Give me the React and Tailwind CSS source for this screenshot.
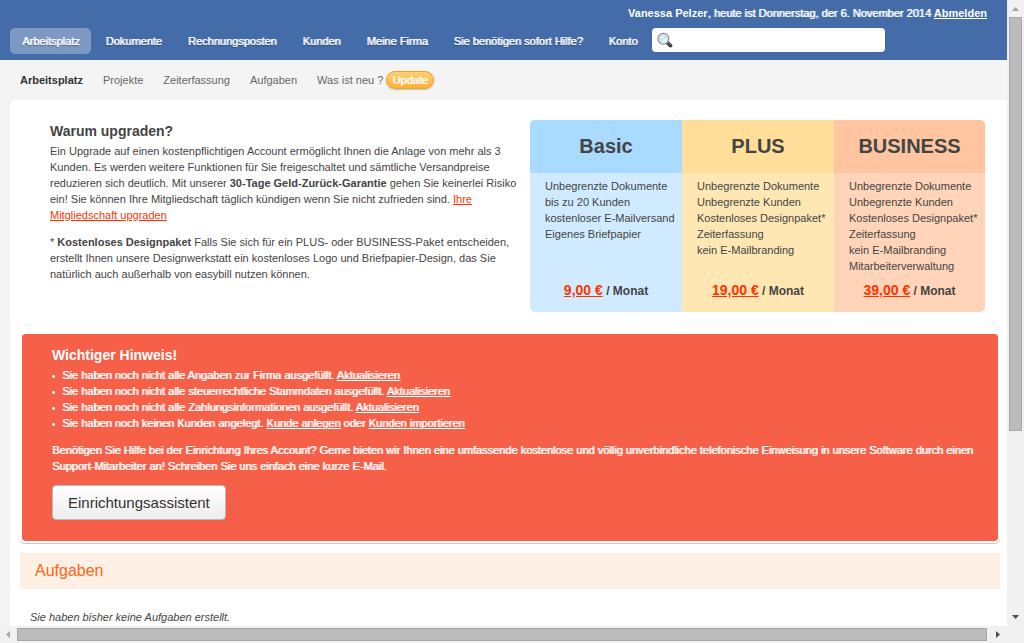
import React from "react";

const navItems = [
  "Dokumente",
  "Rechnungsposten",
  "Kunden",
  "Meine Firma",
  "Sie benötigen sofort Hilfe?",
  "Konto",
];

const plans = [
  {
    name: "Basic",
    price: "9,00 €",
    head: "bg-[#a8dbff]",
    body: "bg-[#d0ebff]",
    features: [
      "Unbegrenzte Dokumente",
      "bis zu 20 Kunden",
      "kostenloser E-Mailversand",
      "Eigenes Briefpapier",
    ],
  },
  {
    name: "PLUS",
    price: "19,00 €",
    head: "bg-[#ffde99]",
    body: "bg-[#ffe7b3]",
    features: [
      "Unbegrenzte Dokumente",
      "Unbegrenzte Kunden",
      "Kostenloses Designpaket*",
      "Zeiterfassung",
      "kein E-Mailbranding",
    ],
  },
  {
    name: "BUSINESS",
    price: "39,00 €",
    head: "bg-[#ffc5a1]",
    body: "bg-[#ffd4b9]",
    features: [
      "Unbegrenzte Dokumente",
      "Unbegrenzte Kunden",
      "Kostenloses Designpaket*",
      "Zeiterfassung",
      "kein E-Mailbranding",
      "Mitarbeiterverwaltung",
    ],
  },
];

const notices = [
  { text: "Sie haben noch nicht alle Angaben zur Firma ausgefüllt.", links: ["Aktualisieren"] },
  { text: "Sie haben noch nicht alle steuerrechtliche Stammdaten ausgefüllt.", links: ["Aktualisieren"] },
  { text: "Sie haben noch nicht alle Zahlungsinformationen ausgefüllt.", links: ["Aktualisieren"] },
  { text: "Sie haben noch keinen Kunden angelegt.", links: ["Kunde anlegen", "Kunden importieren"] },
];

function SearchIcon() {
  return (
    <svg className="size-4 shrink-0" viewBox="0 0 16 16" aria-hidden="true">
      <defs>
        <radialGradient id="lens" cx="0.6" cy="0.65" r="0.6">
          <stop offset="0" stopColor="#f2fbff" />
          <stop offset="1" stopColor="#9fd0ec" />
        </radialGradient>
      </defs>
      <path d="M10.4 10.6 L13.6 13.6" stroke="#3c3c3c" strokeWidth="3.6" strokeLinecap="round" />
      <path d="M10.8 10 L13.8 12.8" stroke="#8b8b8b" strokeWidth="1" strokeLinecap="round" />
      <circle cx="6.4" cy="6.8" r="5.4" fill="url(#lens)" stroke="#858585" strokeWidth="1.2" />
      <circle cx="6.4" cy="6.8" r="4.3" fill="none" stroke="#e3e3e3" strokeWidth="1.1" />
      <path d="M4 6.2 A2.8 2.8 0 0 1 6.6 4" stroke="#fff" strokeWidth="1.2" fill="none" />
    </svg>
  );
}

function Header() {
  return (
    <header className="flex h-[60px] flex-col bg-[#446ca9] text-white">
      <p className="pt-[5px] pr-5 text-right leading-4 [text-shadow:1px_0_0_rgb(255_255_255/0.8)]">
        <b className="[text-shadow:none]">Vanessa Pelzer</b>, heute ist Donnerstag, der 6. November 2014{" "}
        <a href="#abmelden" className="font-bold underline [text-shadow:none]">Abmelden</a>
      </p>
      <div className="flex items-start pt-[7px] pl-2.5">
        <nav className="flex gap-[2px] leading-[26px] whitespace-nowrap [text-shadow:1px_0_0_rgb(255_255_255/0.8),0_1px_1px_rgb(0_0_0/0.4)]">
          <a href="#arbeitsplatz" className="rounded-[5px] bg-[#7c98c3] px-3">Arbeitsplatz</a>
          {navItems.map((item) => (
            <a key={item} href="#nav" className="px-3">{item}</a>
          ))}
        </nav>
        <label className="ml-[3px] flex h-6 w-[233px] items-center rounded bg-white pl-[5px]">
          <SearchIcon />
          <input type="search" aria-label="Suche" className="min-w-0 flex-1 bg-transparent px-2 text-[#444] outline-none" />
        </label>
      </div>
    </header>
  );
}

function SubNav() {
  return (
    <nav className="flex h-10 items-center gap-5 pl-5 whitespace-nowrap text-[#666]">
      <a href="#arbeitsplatz" className="font-bold text-[#333]">Arbeitsplatz</a>
      <a href="#projekte">Projekte</a>
      <a href="#zeiterfassung">Zeiterfassung</a>
      <a href="#aufgaben">Aufgaben</a>
      <a href="#neu" className="flex items-center gap-[3px]">
        Was ist neu ?
        <span className="rounded-full border border-[#f5a01a] bg-linear-to-b from-[#ffd078] to-[#ffb02e] px-[5px] leading-4 text-white shadow-[0_1px_2px_rgba(0,0,0,0.2)] [text-shadow:1px_0_0_rgb(255_255_255/0.8)]">
          Update
        </span>
      </a>
    </nav>
  );
}

function Pricing() {
  return (
    <div className="grid w-[455px] shrink-0 grid-cols-[152px_152px_1fr] overflow-hidden rounded-[5px]">
      {plans.map((plan) => (
        <section key={plan.name} className={`flex h-48 flex-col ${plan.body}`}>
          <h2 className={`h-[53px] text-center text-[20px] leading-[52px] font-bold ${plan.head}`}>{plan.name}</h2>
          <ul className="flex-1 pt-[5px] pl-[15px] whitespace-nowrap">
            {plan.features.map((f) => (
              <li key={f}>{f}</li>
            ))}
          </ul>
          <p className="pb-3 text-center text-xs leading-[18px] font-bold">
            <a href="#bestellen" className="text-[14px] text-[#ff3300] underline">{plan.price}</a> / Monat
          </p>
        </section>
      ))}
    </div>
  );
}

function Upgrade() {
  return (
    <div className="flex items-start gap-[10px] pr-[22px] pl-10">
      <div className="min-w-0 flex-1 pt-[3px]">
        <h2 className="pb-1 text-[14px] leading-4 font-bold">Warum upgraden?</h2>
        <p>
          Ein Upgrade auf einen kostenpflichtigen Account ermöglicht Ihnen die Anlage von mehr als 3
          Kunden. Es werden weitere Funktionen für Sie freigeschaltet und sämtliche Versandpreise
          reduzieren sich deutlich. Mit unserer <b>30-Tage Geld-Zurück-Garantie</b> gehen Sie keinerlei
          Risiko ein! Sie können Ihre Mitgliedschaft täglich kündigen wenn Sie nicht zufrieden sind.{" "}
          <a href="#upgrade" className="text-[#ff3300] underline">Ihre Mitgliedschaft upgraden</a>
        </p>
        <p className="pt-[11px]">
          * <b>Kostenloses Designpaket</b> Falls Sie sich für ein PLUS- oder BUSINESS-Paket entscheiden,
          erstellt Ihnen unsere Designwerkstatt ein kostenloses Logo und Briefpapier-Design, das Sie
          natürlich auch außerhalb von easybill nutzen können.
        </p>
      </div>
      <Pricing />
    </div>
  );
}

function Notice() {
  return (
    <section className="mt-5 mr-[7px] ml-2.5 rounded-[5px] border-2 border-white bg-[#f66048] bg-clip-padding pr-[15px] pl-[30px] pt-[13px] pb-[21px] text-white shadow-[0_1px_0_#c8c8c8]">
      <h2 className="pb-1 text-[14px] leading-4 font-bold">Wichtiger Hinweis!</h2>
      <ul className="[text-shadow:1px_0_0_rgb(255_255_255/0.8)]">
        {notices.map((n) => (
          <li key={n.text} className="flex items-center gap-[7px]">
            <span className="mt-[2px] size-[3px] rounded-full bg-white" />
            <span>
              {n.text}{" "}
              {n.links.map((l, i) => (
                <React.Fragment key={l}>
                  {i > 0 && " oder "}
                  <a href="#hinweis" className="underline">{l}</a>
                </React.Fragment>
              ))}
            </span>
          </li>
        ))}
      </ul>
      <p className="pt-[11px] pb-[11px] [text-shadow:1px_0_0_rgb(255_255_255/0.8)]">
        Benötigen Sie Hilfe bei der Einrichtung Ihres Account? Gerne bieten wir Ihnen eine umfassende
        kostenlose und völlig unverbindliche telefonische Einweisung in unsere Software durch einen
        Support-Mitarbeiter an! Schreiben Sie uns einfach eine kurze E-Mail.
      </p>
      <button
        type="button"
        className="block h-[35px] rounded border border-[#bbb] bg-linear-to-b from-white to-[#ededed] px-[15px] text-[15px] font-normal text-[#333]"
      >
        Einrichtungsassistent
      </button>
    </section>
  );
}

function VerticalScrollbar() {
  return (
    <div className="flex w-[17px] shrink-0 flex-col items-center bg-[#f1f1f1]" aria-hidden="true">
      <svg className="h-[17px] w-[17px] shrink-0" viewBox="0 0 17 17">
        <path d="M5 11 L8.5 7 L12 11 Z" fill="#a3a3a3" />
      </svg>
      <div className="flex w-[13px] flex-1 flex-col">
        <div className="h-[70%] border border-[#a8a8a8] bg-[#bcbcbc]" />
      </div>
      <svg className="h-[17px] w-[17px] shrink-0" viewBox="0 0 17 17">
        <path d="M5 6 L12 6 L8.5 10 Z" fill="#505050" />
      </svg>
    </div>
  );
}

function HorizontalScrollbar() {
  return (
    <div className="flex h-[17px] shrink-0 items-center bg-[#f1f1f1] pr-[17px]" aria-hidden="true">
      <svg className="h-[17px] w-[17px] shrink-0" viewBox="0 0 17 17">
        <path d="M10 5 L6 8.5 L10 12 Z" fill="#a3a3a3" />
      </svg>
      <div className="mr-[3px] h-[13px] flex-1 border border-[#a8a8a8] bg-[#bcbcbc]" />
      <svg className="h-[17px] w-[17px] shrink-0" viewBox="0 0 17 17">
        <path d="M6 5 L10 8.5 L6 12 Z" fill="#505050" />
      </svg>
    </div>
  );
}

export default function App() {
  return (
    <div className="flex h-screen flex-col overflow-hidden font-['Liberation_Sans',Arial,sans-serif] text-[11px] leading-4 text-[#444]">
      <div className="flex min-h-0 flex-1">
        <div className="flex min-w-0 flex-1 flex-col overflow-hidden bg-[#f4f4f4]">
          <Header />
          <SubNav />
          <main className="ml-2.5 flex-1 rounded-tl-[5px] bg-white pt-5">
            <Upgrade />
            <Notice />
            <section className="mt-2.5 mr-[7px] ml-2.5">
              <h2 className="bg-[#fff0e6] px-[15px] text-[16px] leading-9 text-[#ff6515]">Aufgaben</h2>
              <p className="px-2.5 pt-5 italic">Sie haben bisher keine Aufgaben erstellt.</p>
            </section>
          </main>
        </div>
        <VerticalScrollbar />
      </div>
      <HorizontalScrollbar />
    </div>
  );
}
